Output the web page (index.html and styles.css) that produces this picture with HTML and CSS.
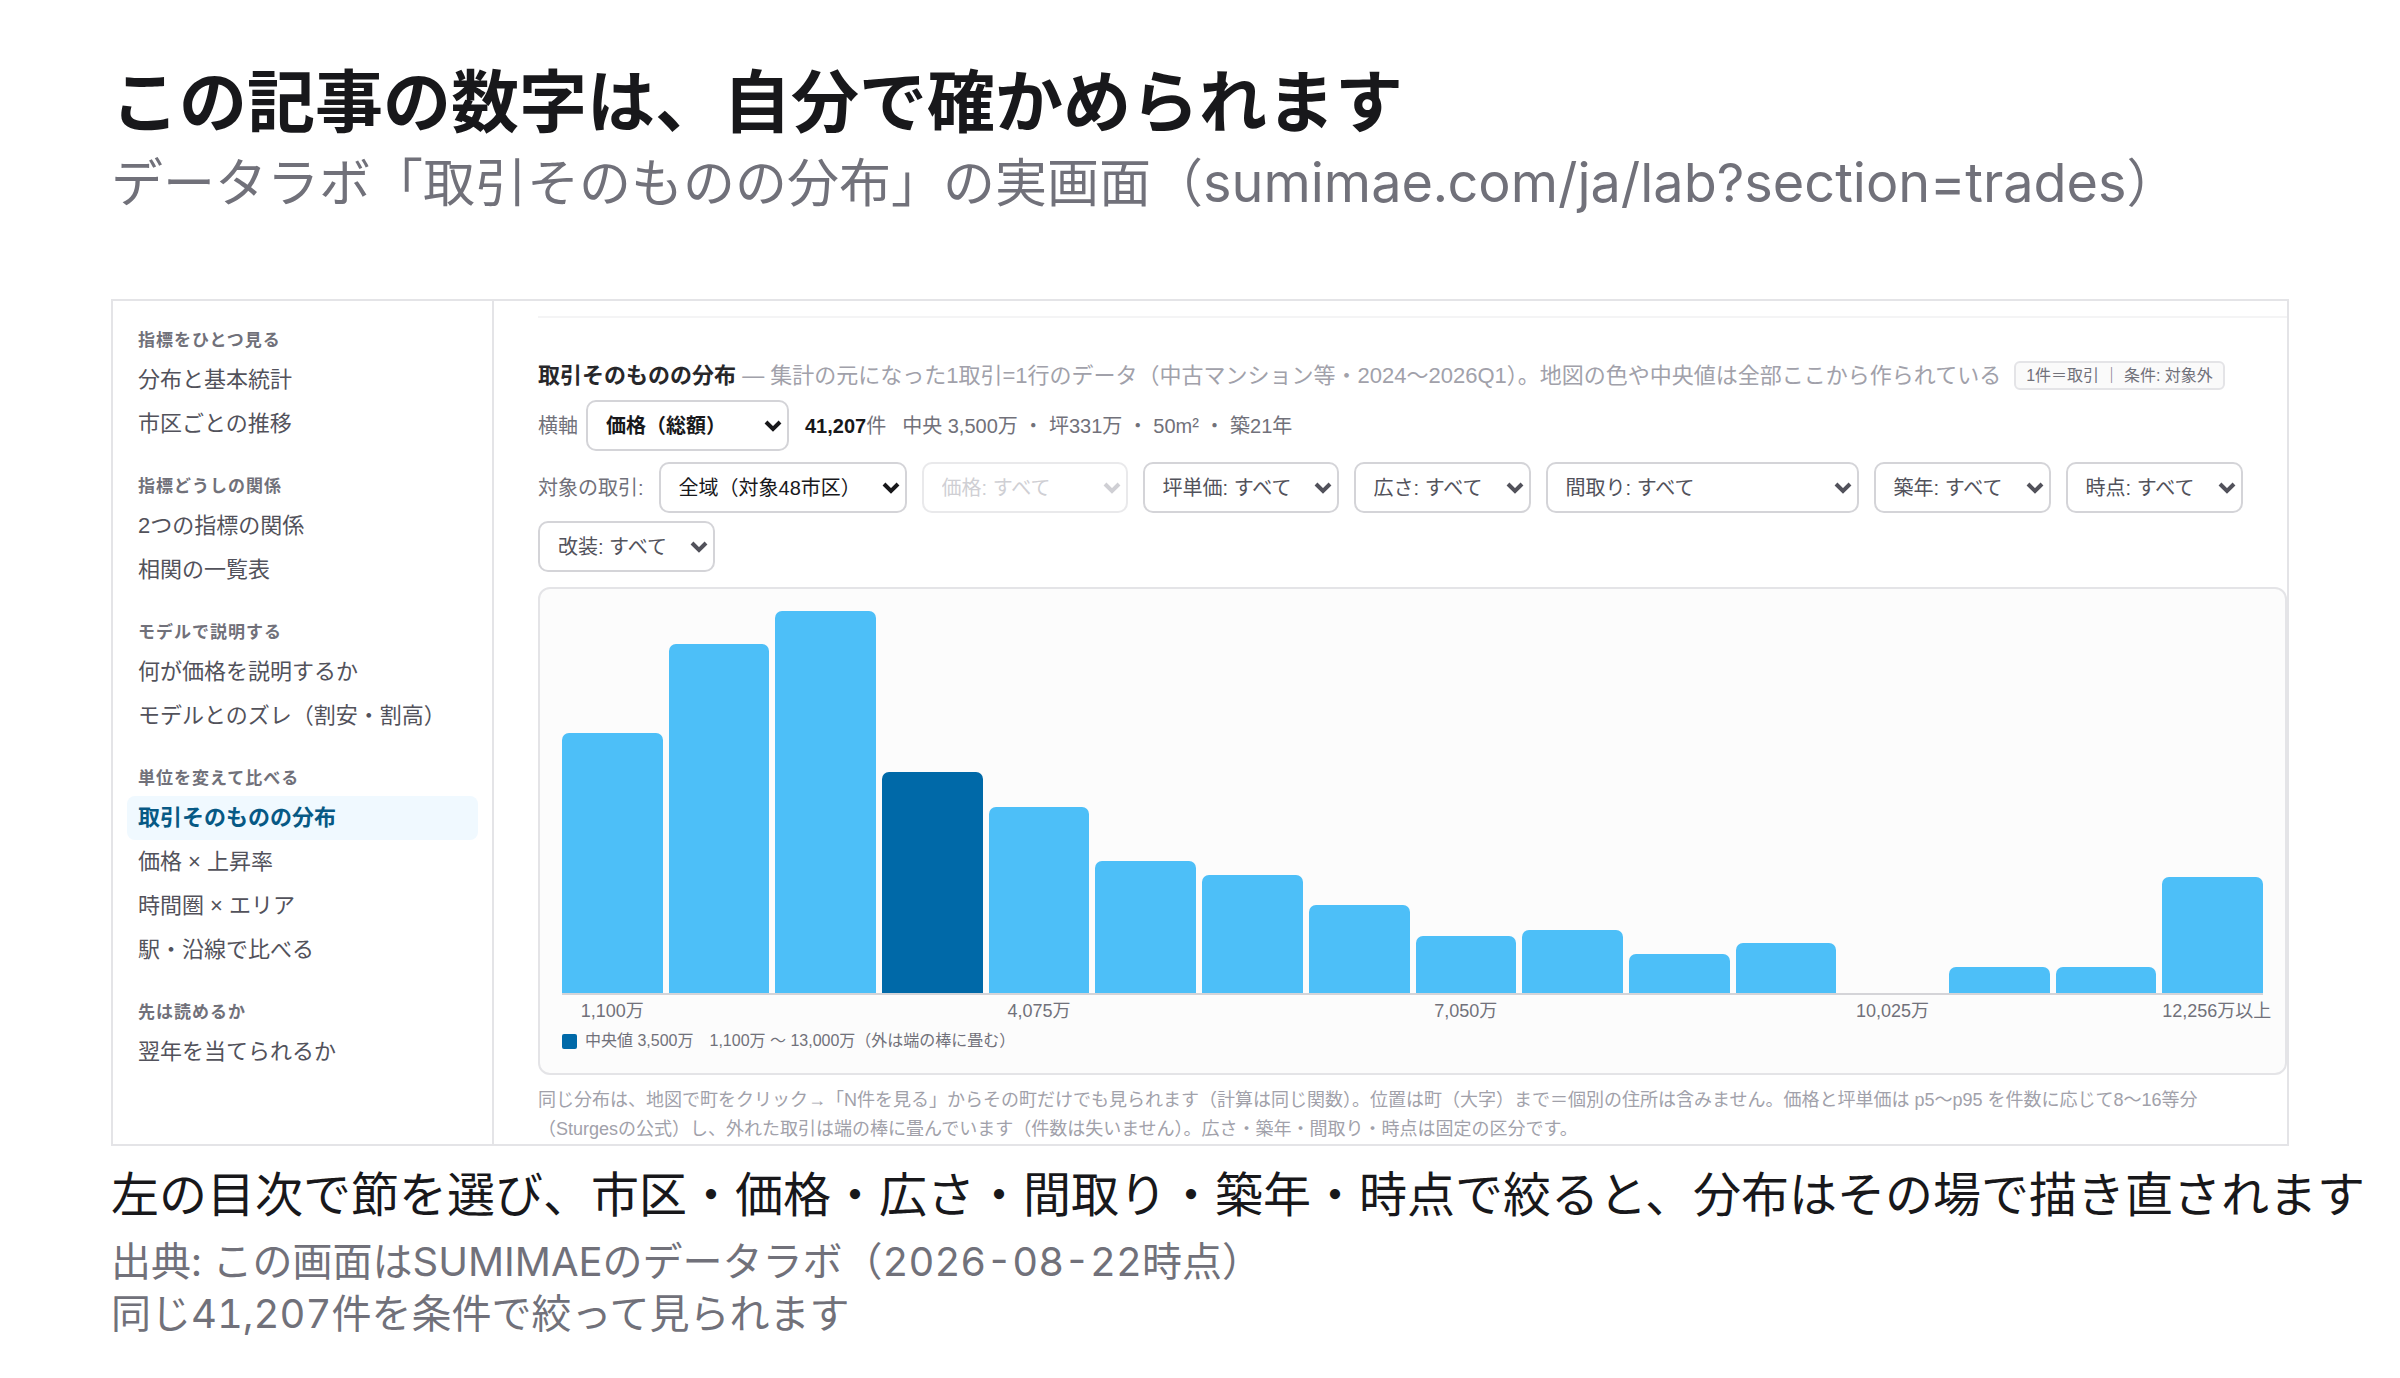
FILE: index.html
```
<!DOCTYPE html>
<html lang="ja">
<head>
  <meta charset="UTF-8" />
  <meta name="viewport" content="width=device-width, initial-scale=1.0" />
  <title>この記事の数字は、自分で確かめられます</title>
  <link rel="stylesheet" href="styles.css">
</head>
<body>
  <header class="page-header">
    <h1>この記事の数字は、自分で確かめられます</h1>
    <p class="subtitle">データラボ「取引そのものの分布」の実画面（<span class="url">sumimae.com/ja/lab?section=trades</span>）</p>
  </header>

  <div class="lab">
    <nav class="toc">
      <section>
        <h2>指標をひとつ見る</h2>
        <a href="#">分布と基本統計</a>
        <a href="#">市区ごとの推移</a>
      </section>
      <section>
        <h2>指標どうしの関係</h2>
        <a href="#">2つの指標の関係</a>
        <a href="#">相関の一覧表</a>
      </section>
      <section>
        <h2>モデルで説明する</h2>
        <a href="#">何が価格を説明するか</a>
        <a href="#">モデルとのズレ（割安・割高）</a>
      </section>
      <section>
        <h2>単位を変えて比べる</h2>
        <a href="#" class="active">取引そのものの分布</a>
        <a href="#">価格 × 上昇率</a>
        <a href="#">時間圏 × エリア</a>
        <a href="#">駅・沿線で比べる</a>
      </section>
      <section>
        <h2>先は読めるか</h2>
        <a href="#">翌年を当てられるか</a>
      </section>
    </nav>

    <main class="content">
      <div class="intro">
        <p><strong>取引そのものの分布</strong> — 集計の元になった1取引=1行のデータ（中古マンション等・2024〜2026Q1）。地図の色や中央値は全部ここから作られている</p>
        <span class="badge">1件＝取引 ｜ 条件: 対象外</span>
      </div>

      <div class="axis-row">
        <label for="axis">横軸</label>
        <select id="axis" class="axis-select dark">
          <option>価格（総額）</option>
        </select>
        <p class="stats"><span><b>41,207</b>件</span><span>中央 3,500万 ・ 坪331万 ・ 50m² ・ 築21年</span></p>
      </div>

      <div class="filters">
        <label for="area">対象の取引:</label>
        <select id="area" class="area dark"><option>全域（対象48市区）</option></select>
        <select class="price" aria-label="価格" disabled><option>価格: すべて</option></select>
        <select class="unit" aria-label="坪単価"><option>坪単価: すべて</option></select>
        <select aria-label="広さ"><option>広さ: すべて</option></select>
        <select class="layout" aria-label="間取り"><option>間取り: すべて</option></select>
        <select aria-label="築年"><option>築年: すべて</option></select>
        <select aria-label="時点"><option>時点: すべて</option></select>
        <select aria-label="改装"><option>改装: すべて</option></select>
      </div>

      <div class="chart">
        <div class="bars">
          <div class="bar" style="height: 68%"></div>
          <div class="bar" style="height: 91.4%"></div>
          <div class="bar" style="height: 100%"></div>
          <div class="bar median" style="height: 57.8%"></div>
          <div class="bar" style="height: 48.6%"></div>
          <div class="bar" style="height: 34.6%"></div>
          <div class="bar" style="height: 30.9%"></div>
          <div class="bar" style="height: 23%"></div>
          <div class="bar" style="height: 15%"></div>
          <div class="bar" style="height: 16.4%"></div>
          <div class="bar" style="height: 10.1%"></div>
          <div class="bar" style="height: 13%"></div>
          <div class="bar" style="height: 0%"></div>
          <div class="bar" style="height: 6.8%"></div>
          <div class="bar" style="height: 6.8%"></div>
          <div class="bar" style="height: 30.4%"></div>
        </div>
        <div class="ticks">
          <span>1,100万</span><span></span><span></span><span></span>
          <span>4,075万</span><span></span><span></span><span></span>
          <span>7,050万</span><span></span><span></span><span></span>
          <span>10,025万</span><span></span><span></span>
          <span>12,256万以上</span>
        </div>
        <div class="legend">
          <span class="swatch"></span>
          <span>中央値 3,500万</span>
          <span class="range">1,100万 〜 13,000万（外は端の棒に畳む）</span>
        </div>
      </div>

      <p class="note">同じ分布は、地図で町をクリック→「N件を見る」からその町だけでも見られます（計算は同じ関数）。位置は町（大字）まで＝個別の住所は含みません。価格と坪単価は p5〜p95 を件数に応じて8〜16等分（Sturgesの公式）し、外れた取引は端の棒に畳んでいます（件数は失いません）。広さ・築年・間取り・時点は固定の区分です。</p>
    </main>
  </div>

  <footer class="page-footer">
    <p class="caption">左の目次で節を選び、市区・価格・広さ・間取り・築年・時点で絞ると、分布はその場で描き直されます</p>
    <p class="source">出典: この画面はSUMIMAEのデータラボ（2026-08-22時点）<br>同じ41,207件を条件で絞って見られます</p>
  </footer>
</body>
</html>
```
FILE: styles.css
```
* {
  box-sizing: border-box;
}

body {
  margin: 0;
  padding: 61px 0 0 111px;
  background: #fff;
  color: #18181b;
  font-family: Inter, "Noto Sans CJK JP", sans-serif;
  font-variant-numeric: tabular-nums;
}

h1, h2, p {
  margin: 0;
}

.page-header h1 {
  font-size: 68px;
  line-height: 82px;
}

.subtitle {
  margin-bottom: 74px;
  color: #71717a;
  font-size: 52px;
  line-height: 82px;
}

.subtitle .url {
  font-size: 54px;
  line-height: 1;
}

/* Lab panel */
.lab {
  display: flex;
  margin-right: 111px;
  border: 2px solid #e4e4e7;
  font-family: "Liberation Sans", "Noto Sans CJK JP", sans-serif;
}

.toc {
  display: flex;
  flex: none;
  flex-direction: column;
  gap: 28px;
  width: 381px;
  padding: 27px 14px 0;
  border-right: 2px solid #e4e4e7;
}

.toc h2 {
  margin-bottom: 4px;
  padding: 0 11px;
  color: #71717a;
  font-size: 17px;
  font-weight: 600;
  line-height: 26px;
  letter-spacing: 1px;
}

.toc a {
  display: block;
  padding: 0 11px;
  border-radius: 8px;
  color: #52525b;
  font-size: 22px;
  line-height: 44px;
  text-decoration: none;
}

.toc a.active {
  background: #f0f9ff;
  color: #075985;
  font-weight: 600;
}

.content {
  flex: 1;
  min-width: 0;
  margin-top: 15px;
  padding-left: 44px;
}

.intro {
  display: flex;
  align-items: center;
  gap: 13px;
  padding-top: 41px;
  border-top: 2px solid #f4f4f5;
  color: #a1a1aa;
  font-size: 22px;
  line-height: 33px;
  white-space: nowrap;
}

.intro strong {
  color: #27272a;
}

.badge {
  padding: 0 10px;
  border: 2px solid #e4e4e7;
  border-radius: 6px;
  background: #fafafa;
  color: #71717a;
  font-size: 16px;
  line-height: 25px;
}

.axis-row,
.filters {
  display: flex;
  align-items: center;
  color: #71717a;
  font-size: 20px;
}

.axis-row {
  gap: 8px;
  margin: 8px 0 11px;
}

.filters {
  flex-wrap: wrap;
  gap: 8px 15px;
  margin-bottom: 15px;
}

.axis-row label,
.filters label,
.stats {
  padding-bottom: 3px;
}

select {
  appearance: none;
  width: 177px;
  height: 51px;
  padding: 0 32px 0 18px;
  border: 2px solid #d4d4d8;
  border-radius: 10px;
  background: #fff url("data:image/svg+xml,%3Csvg xmlns='http://www.w3.org/2000/svg' width='18' height='14'%3E%3Cpath d='M2 3l7 7 7-7' fill='none' stroke='%2352525b' stroke-width='4'/%3E%3C/svg%3E") no-repeat right 5px center;
  color: #52525b;
  font: inherit;
}

select.dark {
  background-image: url("data:image/svg+xml,%3Csvg xmlns='http://www.w3.org/2000/svg' width='18' height='14'%3E%3Cpath d='M2 3l7 7 7-7' fill='none' stroke='%2318181b' stroke-width='4'/%3E%3C/svg%3E");
  color: #18181b;
}

select:disabled {
  background-image: url("data:image/svg+xml,%3Csvg xmlns='http://www.w3.org/2000/svg' width='18' height='14'%3E%3Cpath d='M2 3l7 7 7-7' fill='none' stroke='%23a1a1aa' stroke-width='4'/%3E%3C/svg%3E");
  color: #a1a1aa;
  opacity: 0.5;
}

.axis-select {
  width: 203px;
  font-weight: 600;
}

.area {
  width: 248px;
}

.price {
  width: 206px;
}

.unit {
  width: 196px;
}

.layout {
  width: 313px;
}

.stats {
  display: flex;
  gap: 16px;
  margin-left: 8px;
}

.stats b {
  color: #18181b;
}

/* Histogram */
.chart {
  padding: 22px 22px 17px;
  border: 2px solid #e4e4e7;
  border-radius: 12px;
  background: #fcfcfc;
}

.bars,
.ticks {
  display: grid;
  grid-template-columns: repeat(16, minmax(0, 1fr));
  column-gap: 6px;
}

.bars {
  align-items: end;
  height: 384px;
  border-bottom: 2px solid #d4d4d8;
}

.bar {
  border-radius: 7px 7px 0 0;
  background: #4dbff8;
}

.bar.median {
  background: #0069a8;
}

.ticks {
  margin-top: 3px;
  color: #71717a;
  font-size: 18px;
  line-height: 26px;
  text-align: center;
  white-space: nowrap;
}

.legend {
  display: flex;
  align-items: center;
  gap: 8px;
  margin-top: 2px;
  color: #71717a;
  font-size: 16px;
  line-height: 30px;
}

.swatch {
  width: 15px;
  height: 15px;
  border-radius: 2px;
  background: #0069a8;
}

.range {
  margin-left: 8px;
}

.note {
  margin-top: 11px;
  padding-right: 44px;
  color: #a1a1aa;
  font-size: 18px;
  line-height: 29px;
}

/* Text under the panel */
.caption {
  margin-top: 15px;
  font-size: 48px;
  line-height: 68px;
  white-space: nowrap;
}

.source {
  margin-top: 7px;
  color: #71717a;
  font-size: 40px;
  line-height: 52px;
}
```
